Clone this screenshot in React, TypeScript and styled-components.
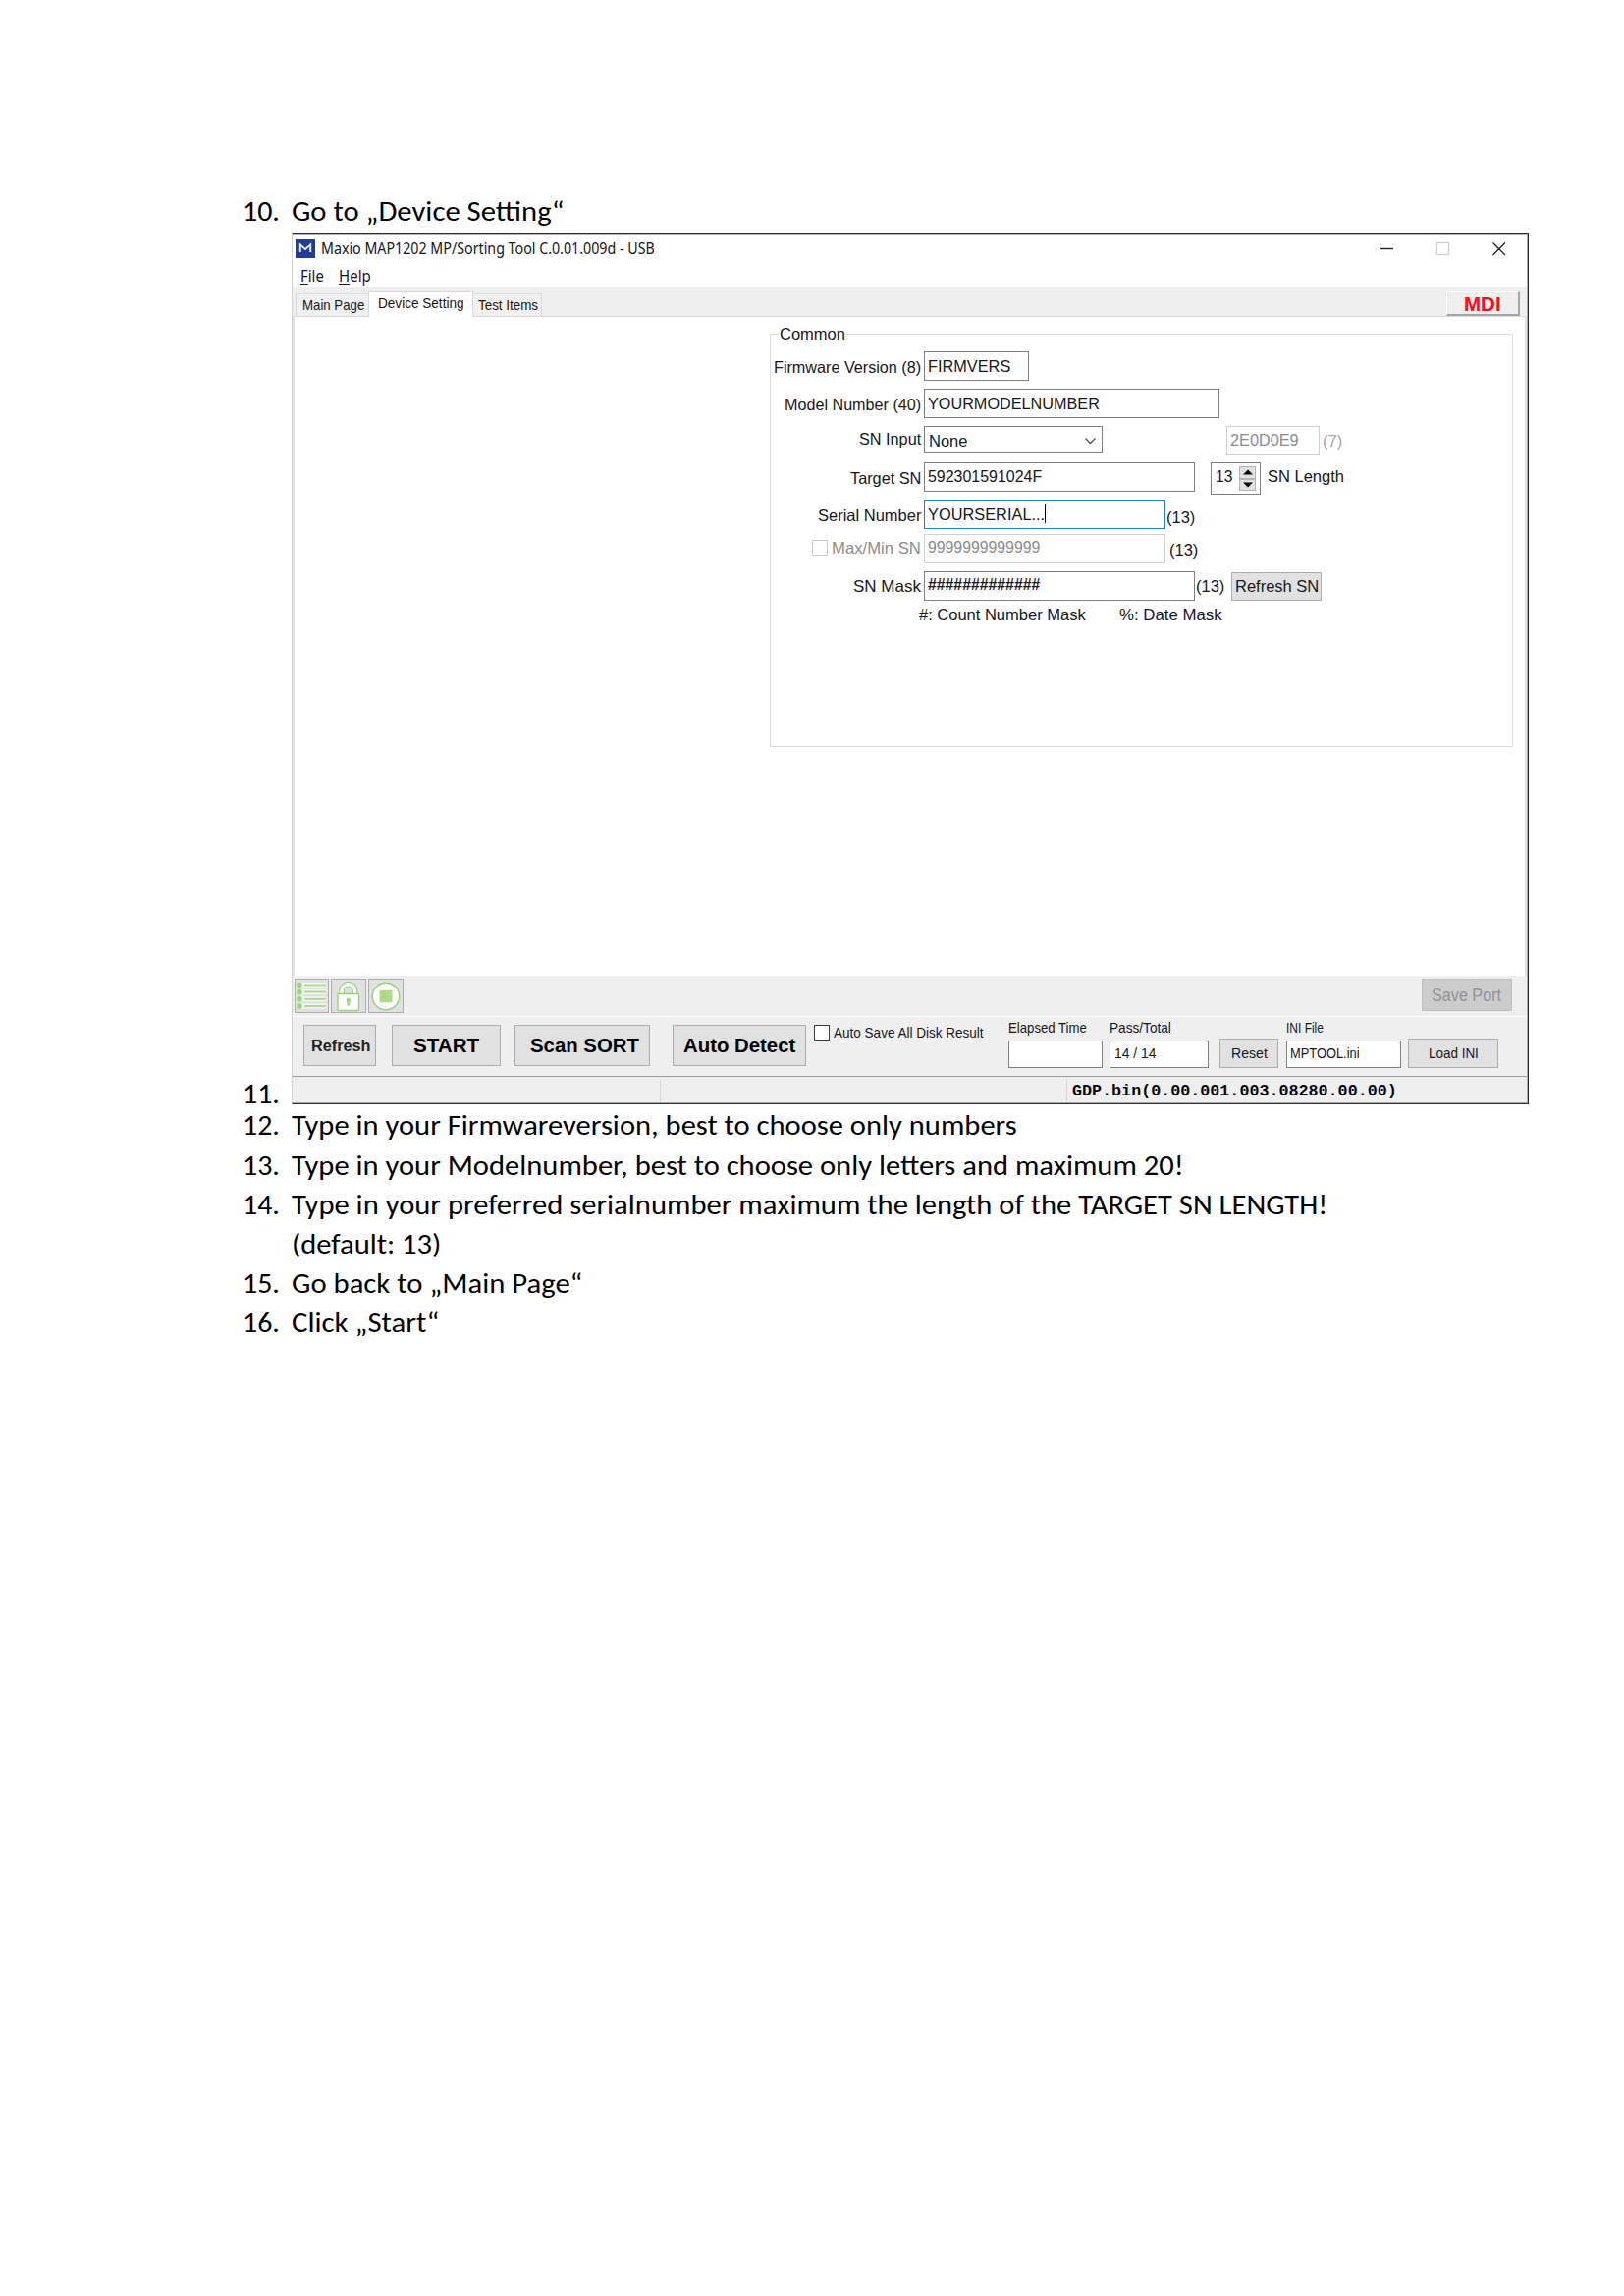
import React, { useLayoutEffect, useRef, useState } from "react";
import styled, { createGlobalStyle, css } from "styled-components";

const SANS = '"Liberation Sans", Arial, sans-serif';
const DOC = 'Carlito, Lato, sans-serif';
const UI = '"Noto Sans", "Open Sans", sans-serif';
const MONO = '"Liberation Mono", monospace';

/* Distance from the middle of the line box to the baseline, in em. */
const baselineShift: Record<string, number> = { [SANS]: 0.3465, [DOC]: 0.3415, [UI]: 0.388, [MONO]: 0.266 };

const Global = createGlobalStyle`
  *, *::before, *::after { box-sizing: border-box; }
  html, body { margin: 0; background: #fff; }
`;

interface TextStyle {
  $w: number;
  $base: number;
  $ml: number;
  $size: number;
  $font: string;
  $bold: boolean;
  $color: string;
}
const TextBox = styled.span<TextStyle>`
  display: block;
  flex: none;
  width: ${(p) => p.$w}px;
  height: 20px;
  margin-left: ${(p) => p.$ml}px;
  margin-top: ${(p) => p.$base - 10 - baselineShift[p.$font] * p.$size}px;
  font: ${(p) => (p.$bold ? 700 : 400)} ${(p) => p.$size}px/20px ${(p) => p.$font};
  color: ${(p) => p.$color};
`;
const TextRun = styled.span`
  display: inline-block;
  white-space: pre;
  transform-origin: 0 50%;
`;

interface TextProps {
  children: React.ReactNode;
  w: number;
  base: number;
  ml?: number;
  size?: number;
  font?: string;
  bold?: boolean;
  color?: string;
}
/* Condenses or widens a run of text so that it fills a fixed width. */
function Text({ children, w, base, ml = 0, size = 16.5, font = SANS, bold = false, color = "#16161c" }: TextProps) {
  const ref = useRef<HTMLSpanElement>(null);
  const [scale, setScale] = useState(1);
  useLayoutEffect(() => {
    if (ref.current && ref.current.offsetWidth) setScale(w / ref.current.offsetWidth);
  }, [w, children]);
  return (
    <TextBox $w={w} $base={base} $ml={ml} $size={size} $font={font} $bold={bold} $color={color}>
      <TextRun ref={ref} style={{ transform: `scaleX(${scale})` }}>{children}</TextRun>
    </TextBox>
  );
}

const Page = styled.main`
  width: 1654px;
  height: 2339px;
  padding: 190px 97px 0 247px;
  background: #fff;
`;
const Item = styled.div<{ $h: number }>`
  display: flex;
  align-items: flex-start;
  height: ${(p) => p.$h}px;
`;
const NumberCell = styled.div`
  display: flex;
  flex: none;
  width: 50px;
`;

const Window = styled.section`
  display: flex;
  flex-direction: column;
  width: 1260px;
  height: 888px;
  border-style: solid;
  border-width: 1px;
  border-color: #2a2a30 #24242c #2f2f33 #d2d2d2;
  box-shadow: inset 0 1px 0 #b4b4b4, inset -1px 0 0 #b0b0b0, inset 0 -1px 0 #a8a8a8;
  background: #fff;
`;
const Bar = styled.div<{ $h: number; $bg?: string }>`
  display: flex;
  flex: none;
  align-items: flex-start;
  height: ${(p) => p.$h}px;
  background: ${(p) => p.$bg ?? "transparent"};
`;
const TitleIcon = styled.svg`
  flex: none;
  margin: 5px 0 0 3px;
`;
const WindowControls = styled.svg`
  flex: none;
  margin: 8px 0 0 auto;
`;
const Mnemonic = styled.span`
  text-decoration: underline;
  text-underline-offset: 2px;
`;

const TabStrip = styled.div`
  display: flex;
  flex: none;
  align-items: flex-end;
  height: 31px;
  margin-right: 1px;
  padding-left: 3px;
  background: #efefef;
  border-bottom: 1px solid #dcdcdc;
`;
const Tab = styled.div<{ $w: number; $active?: boolean }>`
  display: flex;
  align-items: flex-start;
  width: ${(p) => p.$w}px;
  height: 24px;
  border: 1px solid #d9d9d9;
  border-bottom: 0;
  background: #f0f0f0;
  ${(p) => p.$active && css`
    height: 27px;
    margin: 0 -1px -1px;
    background: #fff;
  `}
`;
const MdiButton = styled.div`
  display: flex;
  align-items: flex-start;
  width: 75px;
  height: 26px;
  margin: 0 7px 0 auto;
  background: #efefef;
  border: 1px solid #fff;
  border-right: 2px solid #a5a5a5;
  border-bottom: 2px solid #a5a5a5;
`;
const TabPage = styled.div`
  display: flex;
  flex: none;
  height: 671px;
  margin-right: 1px;
  border-left: 2px solid #e4e4e4;
  border-right: 2px solid #e0e0e0;
  padding: 17px 12px 0 484px;
`;
const Group = styled.div`
  display: flex;
  flex-direction: column;
  width: 757px;
  height: 421px;
  border: 1px solid #dcdcdc;
`;
const Legend = styled.div`
  display: flex;
  width: 68px;
  height: 17px;
  margin: -9px 0 0 8px;
  background: #fff;
`;
const FormRow = styled.div<{ $h: number }>`
  display: flex;
  flex: none;
  align-items: flex-start;
  height: ${(p) => p.$h}px;
`;
const LabelCell = styled.div`
  display: flex;
  flex: none;
  justify-content: flex-end;
  width: 153px;
  margin-right: 3px;
`;
const Field = styled.div<{ $w: number; $h?: number; $ml?: number; $mt?: number; $tone?: "focus" | "disabled" }>`
  display: flex;
  flex: none;
  align-items: flex-start;
  width: ${(p) => p.$w}px;
  height: ${(p) => p.$h ?? 30}px;
  margin-left: ${(p) => p.$ml ?? 0}px;
  margin-top: ${(p) => p.$mt ?? 0}px;
  background: #fff;
  border: 1px solid ${(p) => (p.$tone === "focus" ? "#1a80d8" : p.$tone === "disabled" ? "#cfcfcf" : "#7f7f7f")};
`;
const CheckBox = styled.div<{ $disabled?: boolean; $mt: number; $ml?: number }>`
  flex: none;
  width: 16px;
  height: 16px;
  margin: ${(p) => p.$mt}px 4px 0 ${(p) => p.$ml ?? 0}px;
  background: #fff;
  border: 1px solid ${(p) => (p.$disabled ? "#cccccc" : "#3c3c3c")};
`;
const Caret = styled.div`
  width: 1px;
  height: 20px;
  margin-top: 3px;
  background: #000;
`;
const Chevron = styled.svg`
  flex: none;
  margin: 10px 5px 0 auto;
`;
const Spinner = styled.div`
  display: flex;
  flex-direction: column;
  width: 17px;
  height: 25px;
  margin: 3px 4px 0 auto;
`;
const SpinButton = styled.div`
  display: flex;
  align-items: center;
  justify-content: center;
  height: 12.5px;
  background: #e1e1e1;
  border: 1px solid #b5b5b5;
`;
const Button = styled.div<{ $w: number; $h: number; $ml?: number; $mt?: number; $disabled?: boolean }>`
  display: flex;
  flex: none;
  align-items: flex-start;
  width: ${(p) => p.$w}px;
  height: ${(p) => p.$h}px;
  margin-left: ${(p) => p.$ml ?? 0}px;
  margin-top: ${(p) => p.$mt ?? 0}px;
  background: ${(p) => (p.$disabled ? "#cccccc" : "#e1e1e1")};
  border: 1px solid ${(p) => (p.$disabled ? "#bfbfbf" : "#adadad")};
`;
const ToolBar = styled(Bar)`
  margin-right: 1px;
  padding: 3px 15px 0 2px;
  gap: 2px;
  border-bottom: 1px solid #fcfcfc;
`;
const ActionBar = styled(Bar)`
  margin-right: 1px;
  padding-left: 11px;
  border-bottom: 1px solid #9c9c9c;
`;
const Column = styled.div<{ $w: number; $ml: number }>`
  display: flex;
  flex-direction: column;
  flex: none;
  width: ${(p) => p.$w}px;
  margin-left: ${(p) => p.$ml}px;
`;
const ColumnHead = styled.div`
  display: flex;
  height: 24px;
`;
const StatusBar = styled(Bar)`
  margin-right: 1px;
`;
const StatusCell = styled.div<{ $w: number }>`
  display: flex;
  flex: none;
  width: ${(p) => p.$w}px;
  height: 23px;
  margin-top: 3px;
  border-right: 1px solid #d6d6d6;
`;
const Spacer = styled.div`
  flex: 1;
`;

const GREY = "#8c8c8c";

function ListIcon() {
  return (
    <svg width="33" height="33" viewBox="0 0 33 33">
      {[5.5, 12.5, 19.8, 27].map((y) => (
        <g key={y}>
          <rect x="5" y={y - 2.5} width="27" height="5" rx="2" fill="#f3f5f0" />
          <circle cx="4" cy={y} r="2.7" fill="#9bd47c" />
          <path d={`M9 ${y}H31`} stroke="#a4d888" strokeWidth="1.8" />
        </g>
      ))}
    </svg>
  );
}
function LockIcon() {
  return (
    <svg width="33" height="33" viewBox="0 0 33 33">
      <path d="M10 15V11.500a6.800 6.800 0 0 1 13.600 0V15" fill="none" stroke="#8fce6c" strokeWidth="5.500" />
      <path d="M10 15V11.500a6.800 6.800 0 0 1 13.600 0V15" fill="none" stroke="#fff" strokeWidth="3.500" />
      <rect x="6" y="14.500" width="21.500" height="17" rx="1" fill="#fff" stroke="#98d278" strokeWidth="1.400" />
      <circle cx="16.800" cy="21" r="2.300" fill="#a0d584" />
      <path d="M16.800 22v4.500" stroke="#a0d584" strokeWidth="2.800" />
    </svg>
  );
}
function StopIcon() {
  return (
    <svg width="33" height="33" viewBox="0 0 33 33">
      <circle cx="17" cy="17" r="13.800" fill="#fff" stroke="#98d278" strokeWidth="1.500" />
      <rect x="10.500" y="10.800" width="13" height="12.500" fill="#b0d98c" />
    </svg>
  );
}

function Step({ n, w, h = 40, base = 31, children }: { n?: string; w: number; h?: number; base?: number; children: string }) {
  return (
    <Item $h={h}>
      <NumberCell>{n && <Text w={38} base={base} size={29.17} font={DOC} color="#000">{n}</Text>}</NumberCell>
      <Text w={w} base={base} size={29.17} font={DOC} color="#000">{children}</Text>
    </Item>
  );
}

function ToolWindow() {
  return (
    <Window>
      <Bar $h={31}>
        <TitleIcon width="20" height="20" viewBox="0 0 20 20">
          <rect width="20" height="20" fill="#213c92" />
          <path d="M4.800 14V6.500L10 11L15.200 6.500V14" fill="none" stroke="#dfe6fa" strokeWidth="2" />
        </TitleIcon>
        <Text w={340} base={21} ml={6} size={15.500} font={UI}>Maxio MAP1202 MP/Sorting Tool C.0.01.009d - USB</Text>
        <WindowControls width="150" height="16" viewBox="0 0 150 16">
          <path d="M0 7.500H13" stroke="#222" strokeWidth="1.400" />
          <rect x="57.500" y="1.500" width="12" height="12" fill="none" stroke="#cfcfcf" strokeWidth="1.300" />
          <path d="M114.500 1.500L127 14M127 1.500L114.500 14" stroke="#222" strokeWidth="1.300" />
        </WindowControls>
      </Bar>
      <Bar $h={23}>
        <Text w={24} base={18} ml={8} size={15.500} font={UI}><Mnemonic>F</Mnemonic>ile</Text>
        <Text w={33} base={18} ml={15} size={15.500} font={UI}><Mnemonic>H</Mnemonic>elp</Text>
      </Bar>
      <TabStrip>
        <Tab $w={75}><Text w={63} base={17} ml={6} size={14.500}>Main Page</Text></Tab>
        <Tab $w={107} $active><Text w={88} base={17} ml={9} size={14.500}>Device Setting</Text></Tab>
        <Tab $w={71}><Text w={61} base={17} ml={5} size={14.500}>Test Items</Text></Tab>
        <MdiButton><Text w={38} base={20} ml={17} size={20} bold color="#fb0d16">MDI</Text></MdiButton>
      </TabStrip>
      <TabPage>
        <Group>
          <Legend><Text w={67} base={14} ml={1}>Common</Text></Legend>
          <FormRow $h={47}>
            <LabelCell><Text w={150} base={31}>Firmware Version (8)</Text></LabelCell>
            <Field $w={107} $mt={9}><Text w={84} base={20} ml={3}>FIRMVERS</Text></Field>
          </FormRow>
          <FormRow $h={38}>
            <LabelCell><Text w={139} base={21.500}>Model Number (40)</Text></LabelCell>
            <Field $w={301}><Text w={175} base={19.500} ml={3}>YOURMODELNUMBER</Text></Field>
          </FormRow>
          <FormRow $h={37}>
            <LabelCell><Text w={63} base={19}>SN Input</Text></LabelCell>
            <Field $w={182} $h={27}>
              <Text w={39} base={20} ml={4}>None</Text>
              <Chevron width="13" height="8" viewBox="0 0 13 8"><path d="M1.500 1.500L6.500 6.500L11.500 1.500" fill="none" stroke="#555" strokeWidth="1.400" /></Chevron>
            </Field>
            <Field $w={95} $ml={126} $tone="disabled"><Text w={70} base={18.700} ml={3} color={GREY}>2E0D0E9</Text></Field>
            <Text w={20} base={21} ml={3} color="#a5a5a5">(7)</Text>
          </FormRow>
          <FormRow $h={38}>
            <LabelCell><Text w={72} base={21.700}>Target SN</Text></LabelCell>
            <Field $w={276}><Text w={116} base={19} ml={3}>592301591024F</Text></Field>
            <Field $w={51} $h={33} $ml={16}>
              <Text w={17} base={19} ml={4}>13</Text>
              <Spinner>
                <SpinButton><svg width="10" height="6"><path d="M0 5.500L5 0.500L10 5.500Z" fill="#000" /></svg></SpinButton>
                <SpinButton><svg width="10" height="6"><path d="M0 0.500L5 5.500L10 0.500Z" fill="#000" /></svg></SpinButton>
              </Spinner>
            </Field>
            <Text w={78} base={20} ml={7}>SN Length</Text>
          </FormRow>
          <FormRow $h={35}>
            <LabelCell><Text w={105} base={21.300}>Serial Number</Text></LabelCell>
            <Field $w={246} $tone="focus"><Text w={119} base={19.500} ml={3}>YOURSERIAL...</Text><Caret /></Field>
            <Text w={29} base={24} ml={1}>(13)</Text>
          </FormRow>
          <FormRow $h={38}>
            <LabelCell>
              <CheckBox $disabled $mt={6} />
              <Text w={91} base={20} color={GREY}>Max/Min SN</Text>
            </LabelCell>
            <Field $w={246} $tone="disabled"><Text w={114} base={18} ml={3} color={GREY}>9999999999999</Text></Field>
            <Text w={29} base={22} ml={4}>(13)</Text>
          </FormRow>
          <FormRow $h={30}>
            <LabelCell><Text w={69} base={21}>SN Mask</Text></LabelCell>
            <Field $w={276}><Text w={114} base={18} ml={3} bold>#############</Text></Field>
            <Text w={29} base={21} ml={1}>(13)</Text>
            <Button $w={92} $h={29} $ml={7} $mt={1}><Text w={85} base={19} ml={3}>Refresh SN</Text></Button>
          </FormRow>
          <FormRow $h={30}>
            <Text w={170} base={20} ml={151}>#: Count Number Mask</Text>
            <Text w={105} base={20} ml={34}>%: Date Mask</Text>
          </FormRow>
        </Group>
      </TabPage>
      <ToolBar $h={42} $bg="#efefef">
        <Button $w={35} $h={35}><ListIcon /></Button>
        <Button $w={36} $h={35}><LockIcon /></Button>
        <Button $w={36} $h={35}><StopIcon /></Button>
        <Spacer />
        <Button $w={92} $h={33} $disabled><Text w={71} base={22} ml={9} size={18} color="#929292">Save Port</Text></Button>
      </ToolBar>
      <ActionBar $h={61} $bg="#efefef">
        <Button $w={74} $h={42} $mt={8}><Text w={60} base={26} ml={7} size={16.500} bold color="#222">Refresh</Text></Button>
        <Button $w={111} $h={42} $mt={8} $ml={16}><Text w={67} base={27} ml={21} size={20} bold color="#000">START</Text></Button>
        <Button $w={138} $h={42} $mt={8} $ml={14}><Text w={111} base={27} ml={15} size={20} bold color="#000">Scan SORT</Text></Button>
        <Button $w={136} $h={42} $mt={8} $ml={23}><Text w={114} base={27} ml={10} size={20} bold color="#000">Auto Detect</Text></Button>
        <CheckBox $mt={8} $ml={8} />
        <Text w={153} base={21} size={14.500}>Auto Save All Disk Result</Text>
        <Column $w={96} $ml={25}>
          <ColumnHead><Text w={80} base={16} size={14.500}>Elapsed Time</Text></ColumnHead>
          <Field $w={96} $h={28} />
        </Column>
        <Column $w={101} $ml={7}>
          <ColumnHead><Text w={63} base={16} size={14.500}>Pass/Total</Text></ColumnHead>
          <Field $w={101} $h={28}><Text w={42} base={17} ml={4} size={14.500}>14 / 14</Text></Field>
        </Column>
        <Button $w={60} $h={30} $mt={22} $ml={11}><Text w={37} base={19} ml={11} size={14.500}>Reset</Text></Button>
        <Column $w={117} $ml={8}>
          <ColumnHead><Text w={38} base={16} size={14.500}>INI File</Text></ColumnHead>
          <Field $w={117} $h={28}><Text w={71} base={17} ml={3} size={14.500}>MPTOOL.ini</Text></Field>
        </Column>
        <Button $w={92} $h={30} $mt={22} $ml={7}><Text w={51} base={19} ml={20} size={14.500}>Load INI</Text></Button>
      </ActionBar>
      <StatusBar $h={26} $bg="#efefef">
        <StatusCell $w={375} />
        <StatusCell $w={414} />
        <Text w={331} base={19} ml={5} size={16.500} font={MONO} bold color="#050510">GDP.bin(0.00.001.003.08280.00.00)</Text>
      </StatusBar>
    </Window>
  );
}

export default function App() {
  return (
    <>
      <Global />
      <Page>
        <Step n="10." w={278} h={47} base={35}>Go to „Device Setting“</Step>
        <Item $h={888}>
          <NumberCell><Text w={38} base={887} size={29.17} font={DOC} color="#000">11.</Text></NumberCell>
          <ToolWindow />
        </Item>
        <Step n="12." w={739} h={41}>Type in your Firmwareversion, best to choose only numbers</Step>
        <Step n="13." w={909}>Type in your Modelnumber, best to choose only letters and maximum 20!</Step>
        <Step n="14." w={1055}>Type in your preferred serialnumber maximum the length of the TARGET SN LENGTH!</Step>
        <Step w={152}>(default: 13)</Step>
        <Step n="15." w={296}>Go back to „Main Page“</Step>
        <Step n="16." w={150}>Click „Start“</Step>
      </Page>
    </>
  );
}
